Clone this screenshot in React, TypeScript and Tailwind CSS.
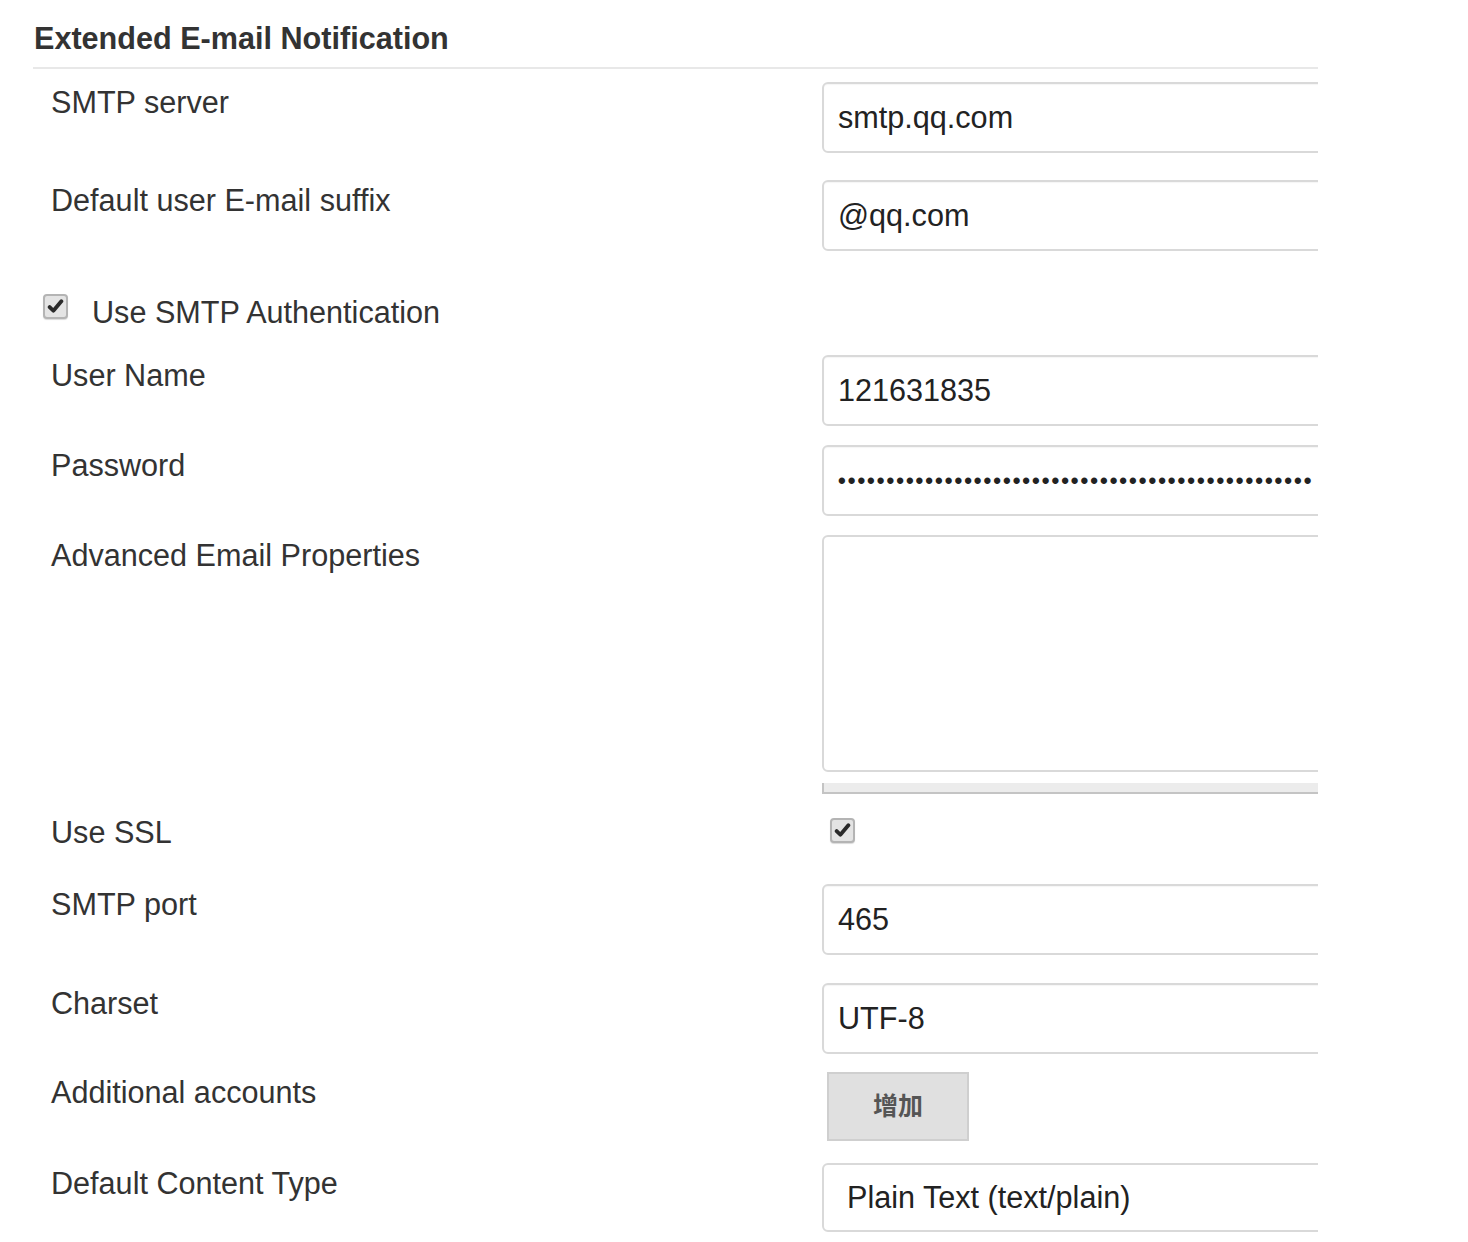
import React from "react";

const font = { fontFamily: '"Liberation Sans", Arial, "Noto Sans CJK SC", sans-serif' };

function Label({ children }: { children: React.ReactNode }) {
  return (
    <div className="w-[789px] shrink-0 pl-[18px] text-[30.6px] leading-[40px] text-[#333]">{children}</div>
  );
}

function TextBox({ value, dots }: { value?: string; dots?: boolean }) {
  return (
    <div className="h-[71px] w-[650px] shrink-0 rounded-[6px] border-2 border-[#d9d9d9] bg-white pl-[14px] flex items-center text-[30.6px] text-[#222] shadow-[inset_0_1px_1px_rgba(0,0,0,0.04)]">
      {dots ? (
        <span className="tracking-[2px] text-[22px] font-bold leading-none whitespace-nowrap">
          {"•".repeat(49)}
        </span>
      ) : (
        <span className="whitespace-nowrap">{value}</span>
      )}
    </div>
  );
}

function Check() {
  return (
    <div className="h-[25px] w-[25px] rounded-[4px] border-2 border-[#b4b4b4] bg-[#e4e4e4] flex items-center justify-center shadow-[0_1px_1px_rgba(0,0,0,0.15)]">
      <svg viewBox="0 0 16 16" width="17" height="17">
        <path d="M2.5 8.5 L6 12 L13.5 3" fill="none" stroke="#2a2a2a" strokeWidth="3.6" strokeLinecap="round" strokeLinejoin="round" />
      </svg>
    </div>
  );
}

export default function App() {
  return (
    <div className="min-h-[1242px] w-[1468px] bg-white" style={font}>
      <div className="ml-[33px] w-[1285px] overflow-hidden">
        <div className="pt-[18px] pb-[9px] border-b-2 border-[#e8e8e8]">
          <div className="pl-px text-[30.6px] leading-[40px] font-bold text-[#333]">Extended E-mail Notification</div>
        </div>

        <div className="mt-[13px] flex">
          <Label>SMTP server</Label>
          <TextBox value="smtp.qq.com" />
        </div>

        <div className="mt-[27px] flex">
          <Label>Default user E-mail suffix</Label>
          <TextBox value="@qq.com" />
        </div>

        <div className="mt-[41px] flex items-start">
          <div className="pl-[10px] pt-[2px]">
            <Check />
          </div>
          <div className="pl-[24px] text-[30.6px] leading-[40px] text-[#333]">Use SMTP Authentication</div>
        </div>

        <div className="mt-[23px] flex">
          <Label>User Name</Label>
          <TextBox value="121631835" />
        </div>

        <div className="mt-[19px] flex">
          <Label>Password</Label>
          <TextBox dots />
        </div>

        <div className="mt-[19px] flex">
          <Label>Advanced Email Properties</Label>
          <div className="flex flex-col">
            <div className="h-[237px] w-[650px] rounded-[6px] border-2 border-[#d9d9d9] bg-white" />
            <div className="mt-[11px] h-[11px] w-[650px] bg-[#ececec] border-l-2 border-b-2 border-[#c4c4c4]" />
          </div>
        </div>

        <div className="mt-[18px] flex">
          <Label>Use SSL</Label>
          <div className="pl-[8px] pt-[6px]">
            <Check />
          </div>
        </div>

        <div className="mt-[32px] flex">
          <Label>SMTP port</Label>
          <TextBox value="465" />
        </div>

        <div className="mt-[28px] flex">
          <Label>Charset</Label>
          <TextBox value="UTF-8" />
        </div>

        <div className="mt-[18px] flex">
          <Label>Additional accounts</Label>
          <div className="pl-[5px]">
            <div className="h-[69px] w-[142px] border-2 border-[#cfcfcf] bg-[#e0e0e0] flex items-center justify-center text-[25px] font-bold text-[#555]">
              增加
            </div>
          </div>
        </div>

        <div className="mt-[22px] flex">
          <Label>Default Content Type</Label>
          <div className="h-[69px] w-[650px] shrink-0 rounded-[6px] border-2 border-[#d9d9d9] bg-white pl-[23px] flex items-center text-[30.6px] text-[#222]">
            Plain Text (text/plain)
          </div>
        </div>
      </div>
    </div>
  );
}
